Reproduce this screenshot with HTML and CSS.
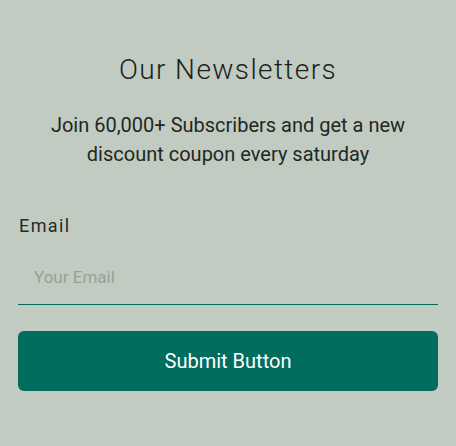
FILE: index.html
```html
<!DOCTYPE html>
<html>
<head>
<meta charset="utf-8">
<link rel="stylesheet" href="styles.css">
</head>
<body>
<section class="newsletter">
  <h2 class="title">Our Newsletters</h2>
  <p class="desc">Join 60,000+ Subscribers and get a new discount coupon every saturday</p>
  <form class="form">
    <label class="label" for="email">Email</label>
    <div class="field">
      <input class="input" id="email" type="email" placeholder="Your Email">
    </div>
    <button class="btn" type="button">Submit Button</button>
  </form>
</section>
</body>
</html>
```
FILE: styles.css
```css
html, body {
  margin: 0;
  padding: 0;
  background: #c2cbc1;
}
body {
  width: 456px;
  height: 446px;
  font-family: Roboto, "Liberation Sans", sans-serif;
}
.newsletter {
  padding: 52px 18px 0;
  display: flex;
  flex-direction: column;
}
.title {
  margin: 0;
  text-align: center;
  font-weight: 300;
  font-size: 28px;
  line-height: 36px;
  height: 36px;
  letter-spacing: 1.4px;
  color: #1c211c;
}
.desc {
  margin: 23px 10px 0;
  text-align: center;
  font-size: 20px;
  line-height: 29px;
  height: 58px;
  color: #222722;
}
.form {
  display: flex;
  flex-direction: column;
  margin-top: 46px;
}
.label {
  font-size: 18px;
  line-height: 22px;
  height: 22px;
  letter-spacing: 1.4px;
  color: #262b26;
  padding-left: 1px;
}
.field {
  margin-top: 20px;
  height: 48px;
  box-sizing: border-box;
  border-bottom: 1px solid #006d5f;
  display: flex;
}
.input {
  flex: 1;
  box-sizing: border-box;
  border: none;
  background: transparent;
  font-family: Roboto, "Liberation Sans", sans-serif;
  font-size: 17px;
  height: 40px;
  padding: 0 0 0 16px;
  margin: 0;
  outline: none;
}
.input::placeholder {
  color: #98a198;
}
.btn {
  margin-top: 26px;
  height: 60px;
  border: none;
  border-radius: 6px;
  background: #006d5f;
  color: #ffffff;
  font-family: Roboto, "Liberation Sans", sans-serif;
  font-size: 20px;
}
```
